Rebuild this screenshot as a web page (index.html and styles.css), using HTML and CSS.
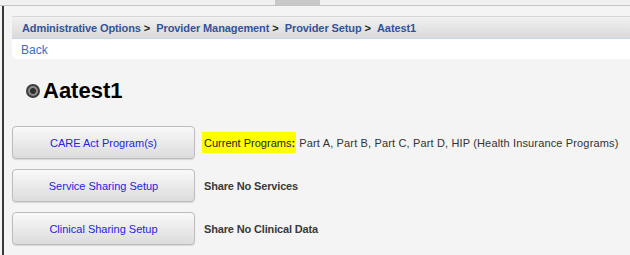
FILE: index.html
```html
<!DOCTYPE html>
<html>
<head>
<meta charset="utf-8">
<link rel="stylesheet" href="styles.css">
</head>
<body>
<div class="topbar"><div class="thumb"></div></div>
<div class="frame">
  <div class="crumbs">
    <a class="crumb">Administrative Options</a><span class="sep">&gt;</span>
    <a class="crumb">Provider Management</a><span class="sep">&gt;</span>
    <a class="crumb">Provider Setup</a><span class="sep">&gt;</span>
    <a class="crumb">Aatest1</a>
  </div>
  <div class="backrow"><a class="back">Back</a></div>
  <h1 class="title"><span class="radio"></span>Aatest1</h1>
  <div class="rows">
    <div class="row">
      <button class="btn">CARE Act Program(s)</button>
      <div class="info"><span class="hl">Current Programs<b>:</b></span> Part A, Part B, Part C, Part D, HIP (Health Insurance Programs)</div>
    </div>
    <div class="row">
      <button class="btn">Service Sharing Setup</button>
      <div class="info strong">Share No Services</div>
    </div>
    <div class="row">
      <button class="btn">Clinical Sharing Setup</button>
      <div class="info strong">Share No Clinical Data</div>
    </div>
  </div>
</div>
</body>
</html>
```
FILE: styles.css
```css
html, body {
  margin: 0;
  padding: 0;
  background: #f4f4f4;
  font-family: "Liberation Sans", Arial, sans-serif;
  width: 630px;
  height: 255px;
  overflow: hidden;
}
.topbar {
  height: 5px;
  background: #f0f0f0;
  border-bottom: 1px solid #c4c4c4;
  display: flex;
  padding-left: 275px;
}
.thumb {
  width: 45px;
  background: #c8c8c8;
}
.frame {
  margin-left: 2px;
  border-left: 2px solid #3a3a3a;
  height: 249px;
  padding: 10px 0 0 8px;
  box-sizing: border-box;
}
.crumbs {
  height: 21px;
  border-top: 1px solid #d8d8d8;
  border-bottom: 1px solid #c2d8ee;
  background: linear-gradient(#f0f0f0, #dadada);
  display: flex;
  align-items: center;
  padding-left: 10px;
  font-size: 11px;
  font-weight: bold;
  color: #2f4f96;
}
.crumb { color: #34539a; letter-spacing: -0.1px; }
.sep {
  color: #222;
  margin: 0 6px 0 3px;
  font-weight: bold;
}
.backrow {
  height: 20px;
  background: #fff;
  border-bottom-left-radius: 6px;
  display: flex;
  align-items: center;
  padding-left: 9px;
}
.back {
  font-size: 12px;
  color: #3b6cc4;
  margin-top: 2px;
}
.title {
  margin: 20px 0 0 14px;
  font-size: 22px;
  font-weight: bold;
  color: #000;
  display: flex;
  align-items: center;
  height: 24px;
  line-height: 24px;
}
.radio {
  width: 10px;
  height: 10px;
  border-radius: 50%;
  border: 2px solid #3c3c3c;
  background: radial-gradient(circle, #2e2e2e 0 2.5px, #8a8a8a 3.5px);
  margin-right: 3px;
  box-sizing: content-box;
}
.rows {
  margin-top: 23px;
  display: flex;
  flex-direction: column;
  gap: 10px;
}
.row {
  display: flex;
  align-items: center;
  gap: 7px;
}
.btn {
  width: 183px;
  height: 33px;
  border: 1px solid #bdbdbd;
  border-radius: 4px;
  background: linear-gradient(#f9f9f9, #dcdcdc);
  color: #2424e6;
  font-family: "Liberation Sans", Arial, sans-serif;
  font-size: 11px;
  padding: 0;
  box-shadow: 0 1px 1px rgba(0,0,0,0.12);
}
.info {
  font-size: 11px;
  color: #333;
  letter-spacing: 0.15px;
}
.info.strong { font-weight: bold; color: #3a3a3a; letter-spacing: -0.15px; margin-left: 2px; }
.hl {
  background: #ffff00;
  color: #222;
  padding: 5px 1px 4px 2px;
  letter-spacing: 0;
}
```
